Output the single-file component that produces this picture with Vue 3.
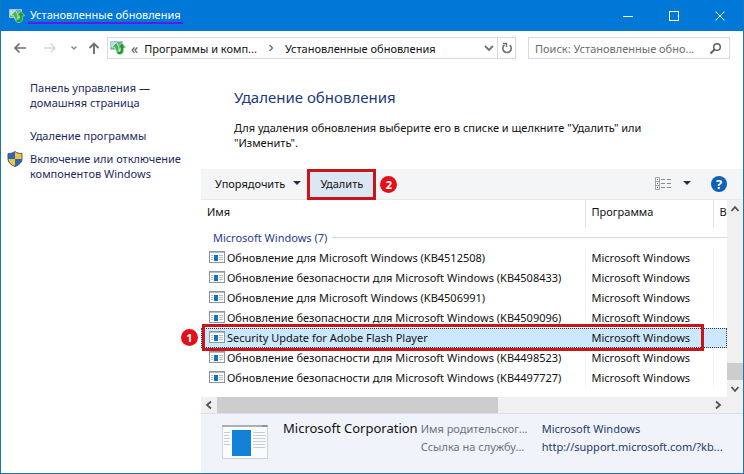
<script setup>
const updates = [
  { name: 'Обновление для Microsoft Windows (KB4512508)', program: 'Microsoft Windows' },
  { name: 'Обновление безопасности для Microsoft Windows (KB4508433)', program: 'Microsoft Windows' },
  { name: 'Обновление для Microsoft Windows (KB4506991)', program: 'Microsoft Windows' },
  { name: 'Обновление безопасности для Microsoft Windows (KB4509096)', program: 'Microsoft Windows' },
  { name: 'Security Update for Adobe Flash Player', program: 'Microsoft Windows', selected: true },
  { name: 'Обновление безопасности для Microsoft Windows (KB4498523)', program: 'Microsoft Windows' },
  { name: 'Обновление безопасности для Microsoft Windows (KB4497727)', program: 'Microsoft Windows' },
]
</script>

<template>
  <div class="window">
    <svg class="defs" width="0" height="0" aria-hidden="true">
      <symbol id="i-updates" viewBox="0 0 16 14">
        <path d="M.5.5h12v8H.5z" fill="#6fa9c0" stroke="#a9c4cc" />
        <path d="M1 1h6L2 6H1z" fill="#b4dcf0" />
        <path d="M6.500 1.500L1.800 6.200h2.500L6.500 11H9V6z" fill="#46b94a" stroke="#e2f7da" stroke-width=".7" />
        <path d="M11.800 2l4 4.800h-2.200v2.700c0 2.300-1.600 4-3.800 4-1.500 0-2.600-.6-3.400-1.700L8.500 10c1 .8 2 .4 2-.9V6.800H8z" fill="#1f9e2f" stroke="#bfe8b4" stroke-width=".6" />
      </symbol>
    </svg>

    <header class="titlebar">
      <svg class="app-icon" width="16" height="14"><use href="#i-updates" /></svg>
      <h1 class="title">Установленные обновления</h1>
      <div class="controls">
        <button type="button" class="control" aria-label="Свернуть">
          <svg width="12" height="12" viewBox="0 0 12 12"><path d="M1 6.500h10" stroke="#fff" /></svg>
        </button>
        <button type="button" class="control" aria-label="Развернуть">
          <svg width="12" height="12" viewBox="0 0 12 12"><rect x="1.500" y="1.500" width="9" height="9" fill="none" stroke="#fff" /></svg>
        </button>
        <button type="button" class="control" aria-label="Закрыть">
          <svg width="12" height="12" viewBox="0 0 12 12"><path d="M1.500 1.500l9 9M10.500 1.500l-9 9" stroke="#fff" /></svg>
        </button>
      </div>
    </header>

    <nav class="navbar">
      <div class="history">
        <button type="button" class="plain" aria-label="Назад">
          <svg width="12" height="12" viewBox="0 0 12 12"><path d="M12 6H1M5.500 1.500L1 6l4.500 4.500" fill="none" stroke="#707070" stroke-width="1.700" /></svg>
        </button>
        <button type="button" class="plain" aria-label="Вперёд">
          <svg width="12" height="12" viewBox="0 0 12 12"><path d="M0 6h11M6.500 1.500L11 6l-4.500 4.500" fill="none" stroke="#d6d6d6" stroke-width="1.500" /></svg>
        </button>
        <button type="button" class="plain" aria-label="Журнал">
          <svg width="8" height="12" viewBox="0 0 8 12"><path d="M1.500 4.500L4 7l2.500-2.500" fill="none" stroke="#8a8a8a" stroke-width="1.500" /></svg>
        </button>
        <button type="button" class="plain" aria-label="Вверх">
          <svg width="12" height="12" viewBox="0 0 12 12"><path d="M6 12V1.500M1.500 6L6 1.500 10.500 6" fill="none" stroke="#707070" stroke-width="1.900" /></svg>
        </button>
      </div>
      <div class="address">
        <svg class="address-icon" width="16" height="14"><use href="#i-updates" /></svg>
        <span class="crumb-sep">«</span>
        <a class="crumb" href="#programs">Программы и комп...</a>
        <svg class="crumb-arrow" width="6" height="8" viewBox="0 0 6 8"><path d="M1.500 1L4.500 4l-3 3" fill="none" stroke="#707070" stroke-width="1.400" /></svg>
        <a class="crumb" href="#installed">Установленные обновления</a>
        <button type="button" class="plain drop" aria-label="Предыдущие расположения">
          <svg width="10" height="8" viewBox="0 0 10 8"><path d="M1 2l4 4 4-4" fill="none" stroke="#707070" stroke-width="1.800" /></svg>
        </button>
        <button type="button" class="plain refresh" aria-label="Обновить">
          <svg width="12" height="12" viewBox="0 0 12 12"><path d="M3.500 3A4.200 4.200 0 1 0 8.800 3.200" fill="none" stroke="#707070" stroke-width="1.600" /><path d="M2 .8h4.200V5H4.800V2.200H2z" fill="#707070" /></svg>
        </button>
      </div>
      <label class="search">
        <input type="search" placeholder="Поиск: Установленные обно..." aria-label="Поиск: Установленные обновления" />
        <svg width="13" height="13" viewBox="0 0 13 13"><circle cx="8" cy="5" r="3.300" fill="none" stroke="#606060" stroke-width="1.500" /><path d="M5.500 7.500L1.500 11.500" stroke="#606060" stroke-width="2" /></svg>
      </label>
    </nav>

    <div class="body">
      <aside class="sidebar">
        <a class="side-link" href="#home">Панель управления — домашняя страница</a>
        <a class="side-link second" href="#uninstall">Удаление программы</a>
        <a class="side-link shielded" href="#features">
          <svg class="shield" width="16" height="16" viewBox="0 0 16 16">
            <path d="M8 .5C6 2 4 2.500 1 2.500v5c0 4 3 6.500 7 8z" fill="#2a67b5" />
            <path d="M8 .5c2 1.500 4 2 7 2v5c0 4-3 6.500-7 8z" fill="#efc543" />
            <path d="M8 8h7c-.2 3.800-3.200 6-7 7.500z" fill="#2a67b5" />
            <path d="M1 8h7v7.500C4.200 14 1.200 11.800 1 8z" fill="#efc543" />
            <path d="M8 .5C6 2 4 2.500 1 2.500v5c0 4 3 6.500 7 8 4-1.500 7-4 7-8v-5c-3 0-5-.5-7-2z" fill="none" stroke="#4d5a63" />
          </svg>
          Включение или отключение компонентов Windows
        </a>
      </aside>

      <main class="main">
        <section class="intro">
          <h2>Удаление обновления</h2>
          <p>Для удаления обновления выберите его в списке и щелкните "Удалить" или "Изменить".</p>
        </section>

        <div class="toolbar">
          <button type="button" class="tool organize">
            Упорядочить
            <svg width="8" height="4" viewBox="0 0 8 4"><path d="M0 0h8L4 4z" fill="#22344d" /></svg>
          </button>
          <button type="button" class="tool remove">Удалить</button>
          <span class="badge">2</span>
          <div class="tool-right">
            <button type="button" class="tool view" aria-label="Изменить представление">
              <svg width="17" height="13" viewBox="0 0 17 13">
                <path d="M.5.5h4v12h-4zM.5 4.500h4M.5 8.500h4" fill="none" stroke="#a3a3a3" />
                <path d="M2 2.500h1M2 6.500h1M2 10.500h1" stroke="#666" />
                <path d="M6 2.500h4M12 2.500h4M6 6.500h4M12 6.500h4M6 10.500h4M12 10.500h4" stroke="#8b8b8b" />
              </svg>
            </button>
            <button type="button" class="tool view-drop" aria-label="Дополнительно">
              <svg width="8" height="4" viewBox="0 0 8 4"><path d="M0 0h8L4 4z" fill="#22344d" /></svg>
            </button>
            <button type="button" class="help" aria-label="Справка">?</button>
          </div>
        </div>

        <div class="list">
          <div class="table-area">
            <table>
              <colgroup>
                <col />
                <col class="col-program" />
                <col class="col-rest" />
              </colgroup>
              <thead>
                <tr>
                  <th scope="col">Имя</th>
                  <th scope="col">Программа</th>
                  <th scope="col">В</th>
                </tr>
              </thead>
              <tbody>
                <tr>
                  <th class="group" colspan="3" scope="rowgroup"><span>Microsoft Windows (7)</span></th>
                </tr>
                <tr v-for="item in updates" :key="item.name" :class="{ selected: item.selected }">
                  <td>
                    <div class="name">
                      <svg width="16" height="13" viewBox="0 0 16 13">
                        <rect x=".5" y=".5" width="15" height="11" fill="#fdfdfd" stroke="#8e979e" />
                        <path d="M1 1.500h14" stroke="#b5bcc1" />
                        <path d="M5 4h4v6H5z" fill="#1173c6" />
                        <path d="M2 4.500h2M2 6.500h2M2 8.500h2M10 4.500h4M10 6.500h4M10 8.500h4" stroke="#b6bbc0" />
                      </svg>
                      {{ item.name }}
                    </div>
                  </td>
                  <td>{{ item.program }}</td>
                  <td>
                    <template v-if="item.selected">
                      <span class="frame"></span>
                      <span class="badge row-badge">1</span>
                    </template>
                  </td>
                </tr>
              </tbody>
            </table>
          </div>
          <div class="vscroll">
            <button type="button" class="plain arrow" aria-label="Вверх">
              <svg width="10" height="8" viewBox="0 0 10 8"><path d="M1.500 6L5 2l3.500 4" fill="none" stroke="#505050" stroke-width="1.800" /></svg>
            </button>
            <div class="vthumb"></div>
            <button type="button" class="plain arrow" aria-label="Вниз">
              <svg width="10" height="8" viewBox="0 0 10 8"><path d="M1.500 2L5 6l3.500-4" fill="none" stroke="#505050" stroke-width="1.800" /></svg>
            </button>
          </div>
        </div>

        <div class="hscroll">
          <button type="button" class="plain arrow" aria-label="Влево">
            <svg width="8" height="10" viewBox="0 0 8 10"><path d="M6 1.500L2 5l4 3.500" fill="none" stroke="#505050" stroke-width="1.800" /></svg>
          </button>
          <div class="htrack"><div class="hthumb"></div></div>
          <button type="button" class="plain arrow" aria-label="Вправо">
            <svg width="8" height="10" viewBox="0 0 8 10"><path d="M2 1.500L6 5 2 8.500" fill="none" stroke="#505050" stroke-width="1.800" /></svg>
          </button>
        </div>

        <footer class="details">
          <svg class="preview" width="46" height="34" viewBox="0 0 46 34">
            <rect x=".5" y=".5" width="45" height="33" fill="#fafbfc" stroke="#cfd4d9" />
            <path d="M0 1h46" stroke="#a9afb5" stroke-width="2" />
            <path d="M40 1h5" stroke="#72797f" />
            <path d="M10 5h19v26H10z" fill="#1380d8" />
            <path d="M2 7.500h6M2 10.500h5M2 13.500h6M2 16.500h5M2 19.500h6M31 7.500h12M31 10.500h13M31 13.500h12M31 16.500h13M31 19.500h12M31 22.500h12" stroke="#c9cdd1" />
          </svg>
          <strong class="publisher">Microsoft Corporation</strong>
          <dl>
            <dt>Имя родительског...</dt>
            <dd>Microsoft Windows</dd>
            <dt>Ссылка на службу...</dt>
            <dd>http://support.microsoft.com/?kb...</dd>
          </dl>
        </footer>
      </main>
    </div>
  </div>
</template>

<style>
body {
  background: #fff;
}
</style>

<style scoped>
* {
  box-sizing: border-box;
}
.window {
  display: flex;
  flex-direction: column;
  min-height: 100vh;
  border: 1px solid #1b76b8;
  border-top: 0;
  background: #fff;
  color: #111;
  font-family: "Noto Sans", "Open Sans", sans-serif;
  font-size: 11px;
  line-height: 15px;
}
.defs {
  position: absolute;
}
button {
  display: flex;
  align-items: center;
  justify-content: center;
  padding: 0;
  border: 0;
  background: none;
  color: inherit;
  font: inherit;
}
a {
  color: inherit;
  text-decoration: none;
}
svg {
  flex: none;
}
.titlebar {
  display: flex;
  align-items: center;
  height: 31px;
  padding-left: 8px;
  background: #0078d7;
  color: #fff;
}
.title {
  margin: 0 0 0 3px;
  padding: 0 2px;
  border-bottom: 2px solid #5a1be6;
  font-size: 11px;
  font-weight: 400;
}
.controls {
  display: flex;
  margin-left: auto;
}
.control {
  width: 46px;
  height: 30px;
}
.navbar {
  display: flex;
  height: 35px;
  padding: 6px 13px 7px 13px;
}
.history {
  display: grid;
  grid-template-columns: 30px 26px 18px 19px;
  align-items: center;
  justify-items: start;
}
.address {
  display: flex;
  flex: 1;
  align-items: center;
  border: 1px solid #d9d9d9;
  white-space: nowrap;
}
.address-icon {
  margin-left: 2px;
}
.crumb-sep {
  margin: 0 6px 0 5px;
  color: #555;
  font-size: 14px;
}
.crumb-arrow {
  margin: 0 11px;
}
.drop {
  align-self: stretch;
  width: 17px;
  margin-left: auto;
}
.refresh {
  align-self: stretch;
  width: 18px;
  border-left: 1px solid #d9d9d9;
}
.search {
  display: flex;
  width: 202px;
  align-items: center;
  margin-left: 12px;
  padding: 0 7px 0 6px;
  border: 1px solid #d9d9d9;
}
.search input {
  flex: 1;
  min-width: 0;
  padding: 0;
  border: 0;
  outline: 0;
  background: none;
  font: inherit;
}
.search input::placeholder {
  color: #6d6d6d;
  opacity: 1;
}
.body {
  display: flex;
  flex: 1;
}
.sidebar {
  width: 200px;
  padding: 14px 8px 0 29px;
  color: #1b2a5e;
}
.side-link {
  display: block;
  position: relative;
}
.second {
  margin: 18px 0 8px;
}
.shield {
  position: absolute;
  left: -23px;
  top: 0;
}
.main {
  display: flex;
  flex: 1;
  flex-direction: column;
  min-width: 0;
}
.intro {
  padding: 21px 60px 19px 33px;
}
h2 {
  margin: 0 0 13px;
  color: #1a3b7c;
  font-size: 15px;
  font-weight: 400;
  line-height: 20px;
}
.intro p {
  margin: 0;
}
.toolbar {
  display: flex;
  align-items: center;
  height: 31px;
  padding: 0 16px 0 14px;
  border-bottom: 1px solid #e6e8ea;
  background: #f4f5f7;
}
.tool {
  padding-bottom: 2px;
}
.organize {
  gap: 8px;
}
.remove {
  width: 69px;
  height: 31px;
  margin: 0 4px 0 6px;
  border: 3px solid #c8151b;
  background: #dbe8f3;
}
.badge {
  display: flex;
  align-items: center;
  justify-content: center;
  width: 17px;
  height: 17px;
  border-radius: 50%;
  background: #e3101a;
  color: #fff;
  font-size: 11px;
  font-weight: 700;
}
.tool-right {
  display: flex;
  align-items: center;
  margin-left: auto;
}
.view-drop {
  margin: 0 20px 0 11px;
}
.help {
  width: 16px;
  height: 16px;
  border-radius: 50%;
  background: #0f62b5;
  color: #fff;
  font-size: 13px;
  font-weight: 700;
}
.list {
  display: flex;
}
.table-area {
  flex: 1;
  min-width: 0;
  padding-bottom: 9px;
}
table {
  width: 100%;
  border-collapse: collapse;
  border-spacing: 0;
  table-layout: fixed;
  white-space: nowrap;
}
.col-program {
  width: 128px;
}
.col-rest {
  width: 14px;
}
th,
td {
  height: 20px;
  padding: 0 0 2px 6px;
  border-left: 1px solid #f5f5f5;
  font-weight: 400;
  text-align: left;
}
thead th {
  height: 28px;
  border-color: #e4e4e4;
  padding-bottom: 6px;
}
th:first-child,
td:first-child {
  border-left: 0;
}
tbody .group {
  padding-left: 12px;
  color: #2a3a8c;
}
.group span {
  display: flex;
  align-items: center;
  gap: 5px;
}
.group span::after {
  content: "";
  flex: 1;
  height: 1px;
  background: #d9d9d9;
}
.name {
  display: flex;
  align-items: center;
  gap: 2px;
  padding-left: 2px;
}
.selected {
  position: relative;
  background: #cce8ff;
  outline: 1px dotted #333;
  outline-offset: -1px;
}
.selected td {
  border-color: #cce8ff;
}
.frame {
  position: absolute;
  inset: -4px 23px -3px 1px;
  border: 3px solid #c8151b;
}
.row-badge {
  position: absolute;
  left: -20px;
  top: 1px;
}
.vscroll {
  display: flex;
  flex-direction: column;
  width: 16px;
  background: #f0f0f0;
}
.arrow {
  width: 16px;
  height: 17px;
}
.vthumb {
  height: 17px;
  margin-top: auto;
  background: #cdcdcd;
}
.hscroll {
  display: flex;
  align-items: center;
  background: #f0f0f0;
  padding-right: 17px;
}
.hscroll .arrow {
  height: 16px;
}
.htrack {
  flex: 1;
}
.hthumb {
  width: 57%;
  height: 16px;
  background: #cdcdcd;
}
.details {
  display: flex;
  flex: 1;
  padding: 7px 0 8px 21px;
  border-top: 1px solid #d7e2ee;
  background: #f0f3fa;
  white-space: nowrap;
}
.preview {
  margin-top: 4px;
}
.publisher {
  margin: 0 3px 0 15px;
  font-size: 13px;
  font-weight: 400;
}
dl {
  display: grid;
  grid-template-columns: 109px auto;
  grid-auto-rows: 15px;
  gap: 3px 12px;
  margin: 0;
}
dt {
  color: #6b7480;
}
dd {
  margin: 0;
  color: #1e3a66;
}
</style>
